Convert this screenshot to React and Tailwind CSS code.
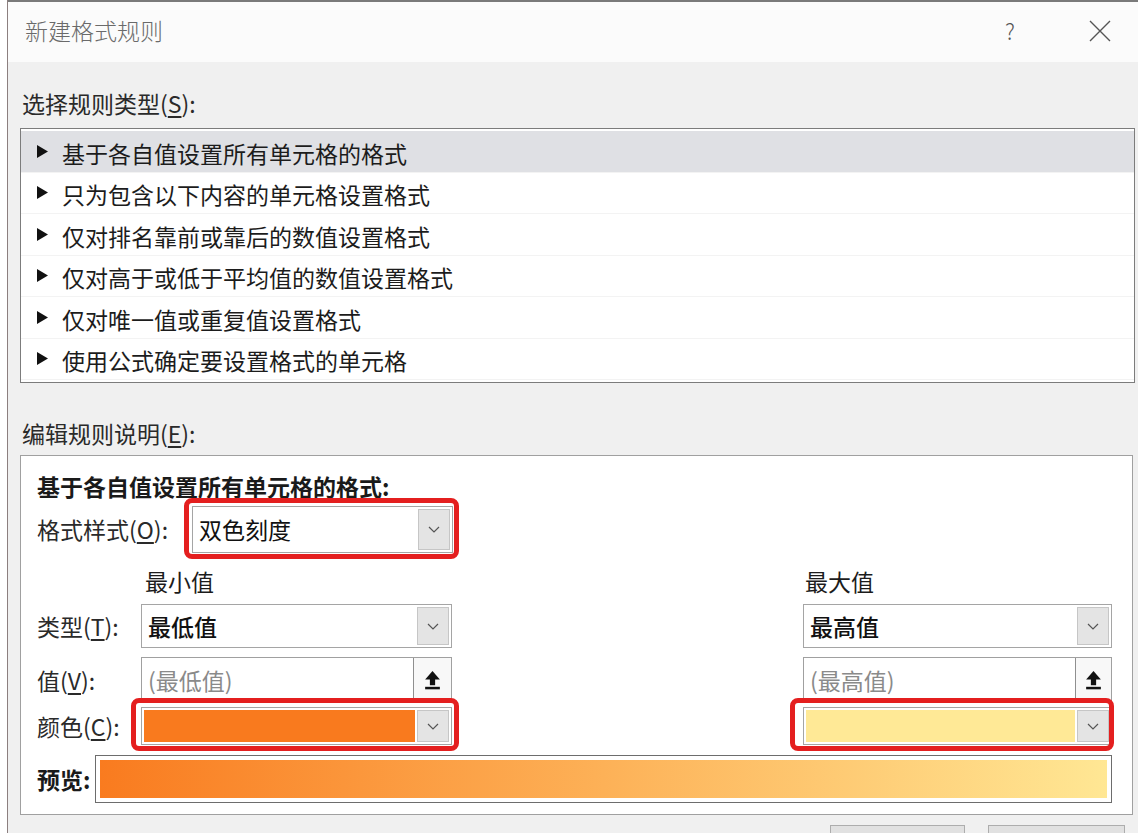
import React from "react";

function Chevron() {
  return (
    <svg width="12" height="7" viewBox="0 0 12 7">
      <path d="M1 1 L6 6 L11 1" fill="none" stroke="#555" strokeWidth="1.2" />
    </svg>
  );
}

function ArrowBtn() {
  return (
    <div className="my-[2px] mr-[2px] flex w-[32px] items-center justify-center border border-[#c6c6c6] bg-[#e4e4e4]">
      <Chevron />
    </div>
  );
}

function Tri() {
  return (
    <svg width="11" height="13" viewBox="0 0 11 13" className="shrink-0">
      <polygon points="0,0 11,6.5 0,13" fill="#111" />
    </svg>
  );
}

function UploadIcon() {
  return (
    <svg width="17" height="21" viewBox="0 0 16 20">
      <polygon points="8,1 15,9 1,9" fill="#111" />
      <rect x="5.5" y="8.5" width="5" height="6" fill="#111" />
      <rect x="1" y="16" width="14" height="2.4" fill="#111" />
    </svg>
  );
}

function RedBox({ cls }) {
  return <div className={"pointer-events-none absolute rounded-[8px] border-[5px] border-[#e41f1f] " + cls} />;
}

const U = ({ c }) => <span className="underline underline-offset-[3px]">{c}</span>;

const rules = [
  "基于各自值设置所有单元格的格式",
  "只为包含以下内容的单元格设置格式",
  "仅对排名靠前或靠后的数值设置格式",
  "仅对高于或低于平均值的数值设置格式",
  "仅对唯一值或重复值设置格式",
  "使用公式确定要设置格式的单元格",
];

export default function App() {
  return (
    <div className="h-[833px] w-[1138px] overflow-hidden bg-white pl-[7px] font-['Noto_Sans_CJK_SC',sans-serif] text-[23px] text-[#1c1c1c]">
      <div className="flex h-full flex-col border-l border-[#8c7f7f]">
        {/* title bar */}
        <div className="flex h-[62px] shrink-0 items-center border-t-2 border-[#7a7a7a] bg-[#fbfbfb] pl-[17px]">
          <div className="pb-[3px] font-light text-[#6a6a6a]">新建格式规则</div>
          <div className="flex-1" />
          <div className="mr-[74px] pb-[3px] text-[22px] font-light text-[#555]">?</div>
          <svg width="22" height="22" viewBox="0 0 22 22" className="mb-[3px] mr-[27px]">
            <path d="M1 1 L21 21 M21 1 L1 21" stroke="#555" strokeWidth="1.4" />
          </svg>
        </div>

        {/* body */}
        <div className="flex-1 bg-[#f0f0f0] pl-[12px] pr-[3px] pt-[26px]">
          <div className="h-[30px] pl-[2px] leading-[30px] text-[#2a2a2a]">
            选择规则类型(<U c="S" />):
          </div>
          <div className="mt-[10px] h-[255px] border border-[#7c7c7c] bg-white pt-[2px]">
            {rules.map((r, i) => (
              <div
                key={i}
                className={
                  "flex h-[41.5px] items-center gap-[14px] border-b border-[#f3f3f3] pl-[16px] " +
                  (i === 0 ? "bg-[#dfe0e4]" : "")
                }
              >
                <Tri />
                <span className="pt-[3px]">{r}</span>
              </div>
            ))}
          </div>

          <div className="mt-[35px] h-[30px] pl-[2px] leading-[30px] text-[#2a2a2a]">
            编辑规则说明(<U c="E" />):
          </div>

          {/* description panel */}
          <div className="mr-[2px] mt-[7px] h-[360px] border border-[#a0a0a0] bg-white pl-[16px] pr-[20px] pt-[15px]">
            <div className="h-[30px] font-bold leading-[30px] text-[#1a1a1a]">基于各自值设置所有单元格的格式:</div>

            <div className="mt-[5px] flex h-[47px] items-center">
              <div className="w-[155px] text-[#2a2a2a]">
                格式样式(<U c="O" />):
              </div>
              <div className="relative flex h-full w-[261px] border border-[#a5a5a5] bg-white">
                <div className="flex flex-1 items-center pl-[6px] text-[#111]">双色刻度</div>
                <ArrowBtn />
                <RedBox cls="-left-[9px] -right-[7px] -top-[9px] -bottom-[7px]" />
              </div>
            </div>

            <div className="mt-[14px] flex h-[28px] items-center leading-[28px]">
              <div className="w-[108px]" />
              <div className="w-[307px]">最小值</div>
              <div className="flex-1" />
              <div className="w-[309px] pl-[2px]">最大值</div>
            </div>

            <div className="mt-[9px] flex h-[44px] items-center">
              <div className="w-[104px] text-[#2a2a2a]">
                类型(<U c="T" />):
              </div>
              <div className="flex h-full w-[311px] border border-[#a5a5a5] bg-white">
                <div className="flex flex-1 items-center pl-[6px] font-medium text-[#111]">最低值</div>
                <ArrowBtn />
              </div>
              <div className="flex-1" />
              <div className="flex h-full w-[309px] border border-[#a5a5a5] bg-white">
                <div className="flex flex-1 items-center pl-[6px] font-medium text-[#111]">最高值</div>
                <ArrowBtn />
              </div>
            </div>

            <div className="mt-[9px] flex h-[46px] items-center">
              <div className="w-[104px] text-[#2a2a2a]">
                值(<U c="V" />):
              </div>
              <div className="flex h-full w-[311px] border border-[#a0a0a0] bg-white">
                <div className="flex flex-1 items-center pl-[6px] text-[#8a8a8a]">(最低值)</div>
                <div className="flex w-[38px] items-center justify-center border-l border-[#8f8f8f] bg-[#f8f8f8]">
                  <UploadIcon />
                </div>
              </div>
              <div className="flex-1" />
              <div className="flex h-full w-[309px] border border-[#a0a0a0] bg-white">
                <div className="flex flex-1 items-center pl-[6px] text-[#8a8a8a]">(最高值)</div>
                <div className="flex w-[36px] items-center justify-center border-l border-[#8f8f8f] bg-[#f8f8f8]">
                  <UploadIcon />
                </div>
              </div>
            </div>

            <div className="mt-[4px] flex h-[38px] items-center">
              <div className="w-[104px] text-[#2a2a2a]">
                颜色(<U c="C" />):
              </div>
              <div className="relative flex h-full w-[311px] border border-[#a5a5a5] bg-white">
                <div className="m-[2px] flex-1 bg-[#f97a1e]" />
                <ArrowBtn />
                <RedBox cls="-left-[11px] -right-[8px] -top-[10px] -bottom-[7px]" />
              </div>
              <div className="flex-1" />
              <div className="relative flex h-full w-[309px] border border-[#a5a5a5] bg-white">
                <div className="m-[2px] flex-1 bg-[#ffe996]" />
                <ArrowBtn />
                <RedBox cls="-left-[14px] -right-[3px] -top-[10px] -bottom-[7px]" />
              </div>
            </div>

            <div className="mt-[10px] flex h-[48px] items-center">
              <div className="w-[58px] font-bold text-[#1a1a1a]">预览:</div>
              <div className="h-full flex-1 border border-[#6d6d6d] bg-white p-[4px]">
                <div className="h-full w-full bg-[linear-gradient(to_right,#f97b1f,#fdb157,#ffe794)]" />
              </div>
            </div>
          </div>

          {/* footer buttons */}
          <div className="mr-[10px] mt-[10px] flex justify-end gap-[23px]">
            <div className="h-[40px] w-[135px] border border-[#adadad] bg-[#e1e1e1]" />
            <div className="h-[40px] w-[137px] border border-[#adadad] bg-[#e1e1e1]" />
          </div>
        </div>
      </div>
    </div>
  );
}
